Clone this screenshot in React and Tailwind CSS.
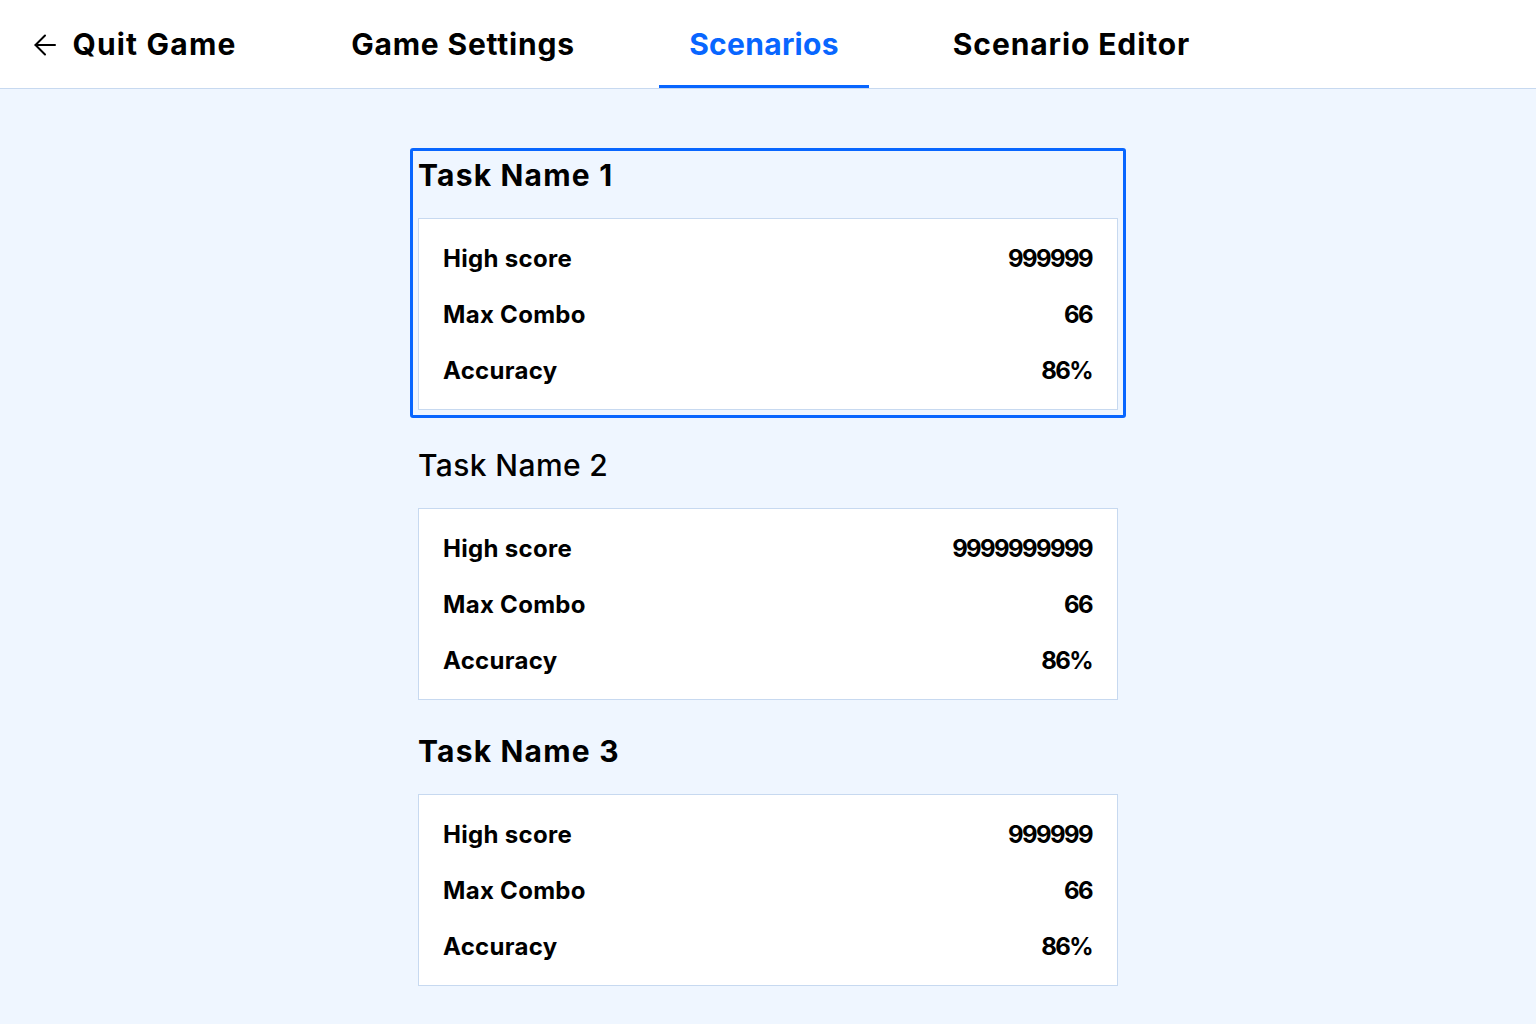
import React from "react";

const font = { fontFamily: "Inter, 'Noto Sans', sans-serif" };

function Row({ label, value }) {
  return (
    <div className="flex h-[56px] items-center justify-between text-[24px] font-bold text-black">
      <span className="tracking-[0.3px]">{label}</span>
      <span className="tracking-[-1.6px] pr-[1px]">{value}</span>
    </div>
  );
}

function Card({ title, high, selected, titleWeight, mt }) {
  return (
    <div
      className={`w-[716px] rounded-[3px] border-[3px] px-[5px] pb-[5px] ${
        selected ? "border-[#0866ff]" : "border-transparent"
      } ${mt}`}
    >
      <div className={`flex h-[67px] items-start pt-[6px] text-[30px] leading-[36px] text-black ${titleWeight}`}>
        {title}
      </div>
      <div className="border border-[#c7d9f0] bg-white px-[24px] pt-[12px] pb-[10px]">
        <Row label="High score" value={high} />
        <Row label="Max Combo" value="66" />
        <Row label="Accuracy" value="86%" />
      </div>
    </div>
  );
}

export default function App() {
  return (
    <div className="min-h-screen bg-[#eff6ff]" style={font}>
      <header className="flex h-[89px] items-stretch border-b border-[#c7d9f0] bg-white pl-[4px]">
        <div className="flex w-[263px] items-center justify-center gap-[16px] pt-[1px] text-[30px] font-bold tracking-[1.2px] text-black">
          <svg width="22" height="22" viewBox="0 0 22 22" fill="none" stroke="black" strokeWidth="2" strokeLinecap="round" strokeLinejoin="round">
            <path d="M21 11H1.5" />
            <path d="M11 1.5 1.5 11 11 20.5" />
          </svg>
          <span>Quit Game</span>
        </div>
        <div className="ml-[54px] flex w-[284px] items-center justify-center pt-[1px] text-[30px] font-bold tracking-[0.8px] text-black">
          Game Settings
        </div>
        <div className="ml-[54px] flex w-[210px] flex-col">
          <div className="flex flex-1 items-center justify-center pt-[4px] text-[30px] font-bold tracking-[0.3px] text-[#0866ff]">
            Scenarios
          </div>
          <div className="h-[3px] bg-[#0866ff]" />
        </div>
        <div className="ml-[54px] flex w-[297px] items-center justify-center pt-[1px] text-[30px] font-bold tracking-[0.9px] text-black">
          Scenario Editor
        </div>
      </header>
      <main className="flex flex-col items-center pt-[59px] pb-[38px]">
        <Card title="Task Name 1" high="999999" selected titleWeight="font-bold tracking-[1.2px]" mt="" />
        <Card title="Task Name 2" high="9999999999" titleWeight="font-medium tracking-[0.4px]" mt="mt-[20px]" />
        <Card title="Task Name 3" high="999999" titleWeight="font-bold tracking-[1.2px]" mt="mt-[16px]" />
      </main>
    </div>
  );
}
